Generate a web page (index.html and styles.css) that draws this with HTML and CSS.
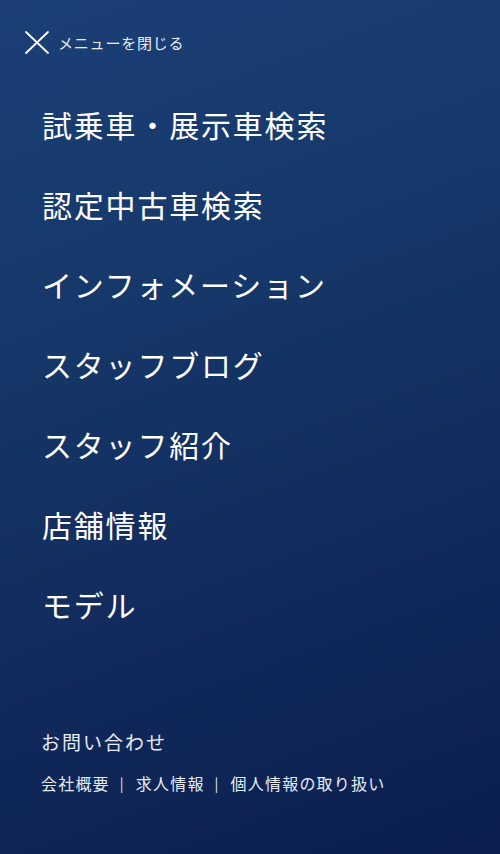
FILE: index.html
```html
<!DOCTYPE html>
<html lang="ja">
<head>
<meta charset="utf-8">
<title>メニュー</title>
<link rel="stylesheet" href="styles.css">
</head>
<body>
<div class="menu">
  <header class="menu-header">
    <button class="close-btn" type="button">
      <svg class="close-icon" viewBox="0 0 24 24" width="24" height="24" aria-hidden="true">
        <path d="M1 1 L23 22 M23 1 L1 22" stroke="#ffffff" stroke-width="1.8" fill="none" stroke-linecap="round"/>
      </svg>
      <span class="close-label">メニューを閉じる</span>
    </button>
  </header>
  <nav class="menu-nav">
    <a class="menu-item" href="#">試乗車・展示車検索</a>
    <a class="menu-item" href="#">認定中古車検索</a>
    <a class="menu-item" href="#">インフォメーション</a>
    <a class="menu-item" href="#">スタッフブログ</a>
    <a class="menu-item" href="#">スタッフ紹介</a>
    <a class="menu-item" href="#">店舗情報</a>
    <a class="menu-item" href="#">モデル</a>
  </nav>
  <footer class="menu-footer">
    <a class="contact" href="#">お問い合わせ</a>
    <div class="sub-links">
      <a href="#">会社概要</a><span class="sep">|</span><a href="#">求人情報</a><span class="sep">|</span><a href="#">個人情報の取り扱い</a>
    </div>
  </footer>
</div>
</body>
</html>
```
FILE: styles.css
```css
html, body {
  margin: 0;
  padding: 0;
}
body {
  width: 500px;
  height: 854px;
  overflow: hidden;
  font-family: "Noto Sans CJK JP", "Noto Sans", sans-serif;
  background: linear-gradient(160deg, #1b4076 0%, #163769 35%, #10295a 70%, #0b1e4d 100%);
  color: #ffffff;
}
a {
  color: inherit;
  text-decoration: none;
}
.menu {
  display: flex;
  flex-direction: column;
  height: 854px;
}
.menu-header {
  padding: 31px 0 0 25px;
}
.close-btn {
  display: flex;
  align-items: center;
  gap: 9px;
  background: none;
  border: 0;
  padding: 0;
  color: #e9eef6;
  font-family: inherit;
  cursor: pointer;
}
.close-icon {
  display: block;
  width: 24px;
  height: 24px;
}
.close-label {
  font-size: 15px;
  letter-spacing: 0.8px;
  line-height: 24px;
}
.menu-nav {
  display: flex;
  flex-direction: column;
  margin-top: 29px;
  padding-left: 42px;
}
.menu-item {
  font-size: 30px;
  line-height: 80px;
  height: 80px;
  letter-spacing: 1.8px;
  color: #ffffff;
}
.menu-footer {
  padding-left: 41px;
  margin-top: 83px;
  display: flex;
  flex-direction: column;
  color: #e6ebf4;
}
.contact {
  font-size: 19px;
  line-height: 30px;
  letter-spacing: 2px;
}
.sub-links {
  margin-top: 14px;
  font-size: 16px;
  line-height: 24px;
  letter-spacing: 1.2px;
  display: flex;
  align-items: center;
}
.sep {
  margin: 0 11px 0 10px;
  font-size: 14px;
}
```
